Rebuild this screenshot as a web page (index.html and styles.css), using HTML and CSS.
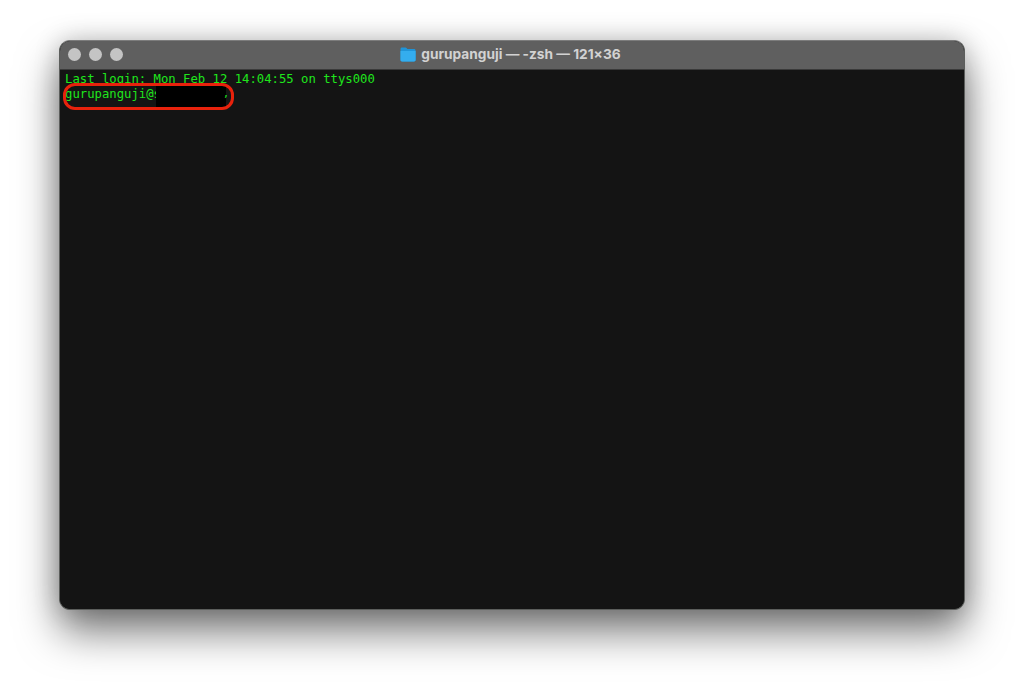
FILE: index.html
```html
<!DOCTYPE html>
<html lang="en">
<head>
<meta charset="utf-8">
<title>Terminal</title>
<link rel="stylesheet" href="styles.css">
</head>
<body>
<main class="window">
  <header class="titlebar">
    <div class="lights"><span class="light"></span><span class="light"></span><span class="light"></span></div>
    <div class="title">
      <svg class="folder" width="16" height="15" viewBox="0 0 16 15" aria-hidden="true">
        <path d="M0.5 2C0.5 1 1.1 0.4 2 0.4H5.4C6 0.4 6.4 0.7 6.8 1.2L7.4 2H14C15 2 15.6 2.6 15.6 3.6V12.8C15.6 13.8 15 14.4 14 14.4H2C1.1 14.4 0.5 13.8 0.5 12.8Z" fill="#1f94d8"/>
        <path d="M0.5 4H15.6V12.8C15.6 13.8 15 14.4 14 14.4H2C1.1 14.4 0.5 13.8 0.5 12.8Z" fill="#34adee"/>
      </svg>
      <span>gurupanguji — -zsh — 121×36</span>
    </div>
  </header>
  <section class="terminal">
    <div class="line">Last login: Mon Feb 12 14:04:55 on ttys000</div>
    <div class="line">gurupanguji@s</div>
    <div class="redaction"></div>
    <div class="speck">,</div>
    <div class="ring"></div>
  </section>
</main>
</body>
</html>
```

FILE: styles.css
```css
* { box-sizing: border-box; }
html, body { margin: 0; height: 100%; overflow: hidden; background: #fff; }
body { padding: 40px 59px 78px 59px; }
.window {
  height: 570px;
  border-radius: 11px;
  overflow: hidden;
  display: flex;
  flex-direction: column;
  box-shadow: 0 22px 42px rgba(0, 0, 0, 0.52), 0 0 26px rgba(0, 0, 0, 0.2);
  border: 1px solid #5c5e5c;
  border-top-color: #7c7c7c;
  background: #141414;
}
.titlebar {
  height: 29px;
  flex: none;
  display: flex;
  align-items: center;
  position: relative;
  background: #5f5f5f;
  border-bottom: 1px solid #3a3a3a;
}
.lights { display: flex; gap: 8.3px; padding-left: 7.5px; padding-bottom: 1px; }
.light { width: 13px; height: 13px; border-radius: 50%; background: #c4c4c4; }
.title {
  position: absolute;
  left: 0;
  right: 0;
  top: 0;
  bottom: 0;
  display: flex;
  align-items: center;
  justify-content: center;
  gap: 5px;
  padding: 0 3px 2px 0;
  color: #d2d2d2;
  font: 700 13.7px "Inter", "Liberation Sans", sans-serif;
}
.folder { flex: none; }
.terminal {
  flex: 1;
  position: relative;
  padding: 2px 5px;
  background: #141414;
  color: #1fe61c;
  font: 12.26px/15px "DejaVu Sans Mono", monospace;
}
.line { white-space: pre; }
.redaction {
  position: absolute;
  left: 96px;
  top: 16px;
  width: 70px;
  height: 21px;
  background: #000;
}
.speck {
  position: absolute;
  left: 163px;
  top: 16px;
  font-size: 10px;
}
.ring {
  position: absolute;
  left: 3px;
  top: 13px;
  width: 171px;
  height: 27px;
  border: 3px solid #e8220c;
  border-radius: 12px;
}
```
